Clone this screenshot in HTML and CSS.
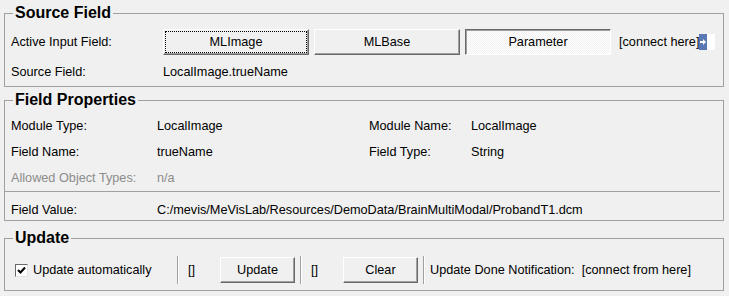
FILE: index.html
```html
<!DOCTYPE html>
<html lang="en">

<head>
    <meta charset="utf-8">
    <title>Field Info</title>
    <link rel="stylesheet" href="styles.css">
</head>

<body>
    <div class="panel">
        <fieldset class="group source">
            <legend>Source Field</legend>

            <div class="source-row">
                <span class="label">Active Input Field:</span>
                <div class="choices">
                    <button class="btn focused">MLImage</button>
                    <button class="btn">MLBase</button>
                    <button class="btn checked">Parameter</button>
                </div>
                <span class="connector">
                    [connect here]
                    <svg class="plug" width="16" height="16" viewBox="0 0 16 16">
                        <rect x="0" y="0" width="8" height="16" fill="#5a78b4" />
                        <rect x="8" y="0" width="8" height="16" fill="#fff" />
                        <path d="M1 8 H5" stroke="#fff" stroke-width="2" />
                        <path d="M4 5 L7 8 L4 11 Z" fill="#fff" />
                    </svg>
                </span>
            </div>

            <div class="source-row text-row">
                <span class="label">Source Field:</span>
                <span>LocalImage.trueName</span>
            </div>
        </fieldset>

        <fieldset class="group props">
            <legend>Field Properties</legend>

            <div class="props-grid">
                <span>Module Type:</span>
                <span>LocalImage</span>
                <span>Module Name:</span>
                <span>LocalImage</span>

                <span>Field Name:</span>
                <span>trueName</span>
                <span>Field Type:</span>
                <span>String</span>

                <span class="disabled">Allowed Object Types:</span>
                <span class="disabled">n/a</span>
                <span></span>
                <span></span>
            </div>

            <hr class="separator">

            <div class="value-row">
                <span>Field Value:</span>
                <span>C:/mevis/MeVisLab/Resources/DemoData/BrainMultiModal/ProbandT1.dcm</span>
            </div>
        </fieldset>

        <fieldset class="group update">
            <legend>Update</legend>

            <div class="update-row">
                <label class="check">
                    <span class="box">
                        <svg width="9" height="9" viewBox="0 0 9 9">
                            <path d="M1 4 L3.5 6.5 L8 1.5" fill="none" stroke="#000" stroke-width="2" />
                        </svg>
                    </span>
                    Update automatically
                </label>
                <span class="vsep"></span>
                <span class="bracket">[]</span>
                <button class="btn small">Update</button>
                <span class="vsep"></span>
                <span class="bracket">[]</span>
                <button class="btn small">Clear</button>
                <span class="vsep"></span>
                <span class="notify">Update Done Notification:&nbsp; [connect from here]</span>
            </div>
        </fieldset>
    </div>
</body>

</html>
```

FILE: styles.css
```css
body {
    margin: 0;
    background-color: #f0f0f0;
    font-family: "Liberation Sans", Arial, sans-serif;
    font-size: 12.7px;
    color: #000;
}

.panel {
    padding: 4px 5px 0 4px;
}

.group {
    margin: 0;
    padding: 0 6px;
    border: 1px solid #a0a0a0;
    min-width: 0;

    legend {
        margin-left: 2px;
        padding: 0 2px;
        font-size: 16px;
        font-weight: bold;
        line-height: 18px;
    }
}

/* source field */
.source {
    padding-bottom: 4px;
}

.source-row {
    display: flex;
    align-items: center;
    height: 26px;
    margin-top: 7px;

    .label {
        width: 152px;
        flex: none;
    }
}

.source-row.text-row {
    height: 20px;
}

.choices {
    display: flex;
    gap: 5px;
}

.btn {
    font-family: inherit;
    font-size: 12.7px;
    color: #000;
    background-color: #f0f0f0;
    border: 1px solid;
    border-color: #fff #696969 #696969 #fff;
    box-shadow: inset -1px -1px 0 #a0a0a0;
    width: 146px;
    height: 26px;
    padding: 0;
}

.btn.focused {
    outline: 1px dotted #000;
    outline-offset: -3px;
}

.btn.checked {
    border-color: #696969 #fff #fff #696969;
    box-shadow: inset 1px 1px 0 #a0a0a0;
    background: repeating-conic-gradient(#fff 0 25%, #f0f0f0 0 50%) 0 0 / 2px 2px;
}

.connector {
    display: flex;
    align-items: center;
    margin-left: 8px;
    white-space: nowrap;
}

.plug {
    display: block;
}

/* field properties */
.props {
    margin-top: 4px;
}

.props-grid {
    display: grid;
    grid-template-columns: 146px 212px 102px 1fr;
    grid-auto-rows: 26px;
    align-items: center;
    margin-top: 4px;
}

.disabled {
    color: #8c8c8c;
}

.separator {
    margin: 0 -3px 0 -6px;
    border: none;
    border-top: 1px solid #a0a0a0;
}

.value-row {
    display: grid;
    grid-template-columns: 146px 1fr;
    align-items: center;
    height: 20px;
    margin-top: 8px;
}

/* update */
.update {
    margin-top: 8px;
    padding-bottom: 6px;
}

.update-row {
    display: flex;
    align-items: center;
    height: 28px;
    margin-top: 9px;

    .btn.small {
        width: 75px;
        flex: none;
    }

    .btn.small + .vsep {
        margin-left: 5px;
    }
}

.check {
    display: flex;
    align-items: center;
    gap: 5px;
    width: 162px;
    margin-left: 4px;
}

.box {
    display: flex;
    align-items: center;
    justify-content: center;
    width: 11px;
    height: 11px;
    background-color: #fff;
    border: 1px solid;
    border-color: #696969 #e3e3e3 #e3e3e3 #696969;
}

.vsep {
    align-self: stretch;
    border-left: 1px solid #a0a0a0;
    border-right: 1px solid #fff;
}

.bracket {
    box-sizing: border-box;
    width: 41px;
    padding-left: 9px;
}

.notify {
    padding-left: 5px;
    white-space: nowrap;
}
```
